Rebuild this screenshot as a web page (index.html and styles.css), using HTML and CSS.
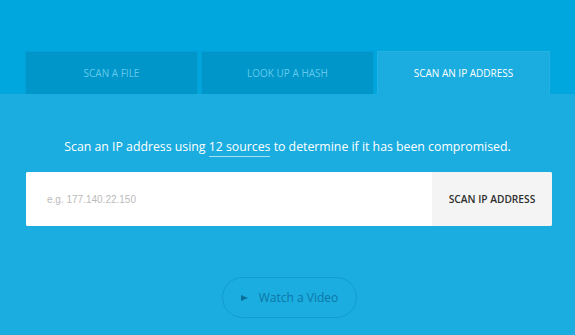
FILE: index.html
```html
<!DOCTYPE html>
<html>
<head>
<meta charset="utf-8">
<link rel="stylesheet" href="styles.css">
</head>
<body>
<div class="hero">
  <nav class="tabs">
    <div class="tab">SCAN A FILE</div>
    <div class="tab">LOOK UP A HASH</div>
    <div class="tab active">SCAN AN IP ADDRESS</div>
  </nav>
</div>
<main class="panel">
  <p class="lead">Scan an IP address using <span class="link">12 sources</span> to determine if it has been compromised.</p>
  <form class="search">
    <input class="field" type="text" placeholder="e.g. 177.140.22.150">
    <button class="submit" type="button">SCAN IP ADDRESS</button>
  </form>
  <div class="video-row">
    <button class="video" type="button"><span class="play"></span>Watch a Video</button>
  </div>
</main>
</body>
</html>
```

FILE: styles.css
```css
html, body {
  margin: 0;
  padding: 0;
}
body {
  background: #1badE0;
  font-family: "Open Sans", "Noto Sans", sans-serif;
  height: 335px;
  overflow: hidden;
}
.hero {
  background: #00a7de;
  padding: 51px 25px 0;
}
.tabs {
  display: grid;
  grid-template-columns: repeat(3, 1fr);
  gap: 3px;
}
.tab {
  height: 43px;
  box-sizing: border-box;
  background: #0096c9;
  border: 1px solid #069fd3;
  border-bottom: none;
  color: #62c9ec;
  font-size: 10px;
  display: flex;
  align-items: center;
  justify-content: center;
}
.tab.active {
  background: #1badE0;
  border-color: #24b2e3;
  color: #ffffff;
}
.panel {
  padding-top: 43px;
}
.lead {
  margin: 0;
  text-align: center;
  color: #ffffff;
  font-size: 12.3px;
  line-height: 20px;
}
.link {
  border-bottom: 1px solid #a8e0f4;
  padding-bottom: 1px;
}
.search {
  display: flex;
  margin: 15px 23px 0 26px;
  height: 54px;
  border-radius: 2px;
  overflow: hidden;
  background: #fff;
}
.field {
  flex: 1;
  border: none;
  outline: none;
  padding: 0 0 0 21px;
  font-family: "Liberation Sans", Arial, sans-serif;
  font-size: 10px;
  color: #333;
  background: #fff;
}
.field::placeholder {
  color: #bbbbbb;
}
.submit {
  width: 120px;
  border: none;
  background: #f4f4f4;
  color: #2e2e2e;
  font-family: "Open Sans", sans-serif;
  font-size: 10.2px;
  font-weight: 600;
  padding: 0;
}
.video-row {
  display: flex;
  justify-content: center;
  padding-top: 51px;
  padding-left: 4px;
}
.video {
  width: 135px;
  height: 41px;
  border-radius: 21px;
  border: 1px solid #129ccd;
  background: transparent;
  color: #0b77a6;
  font-family: "Open Sans", sans-serif;
  font-size: 12px;
  display: flex;
  align-items: center;
  justify-content: center;
  padding: 0 0 1px 0;
}
.play {
  width: 0;
  height: 0;
  border-left: 7px solid #0c6f9b;
  border-top: 3.5px solid transparent;
  border-bottom: 3.5px solid transparent;
  margin-right: 11px;
  margin-top: 1px;
}
```
